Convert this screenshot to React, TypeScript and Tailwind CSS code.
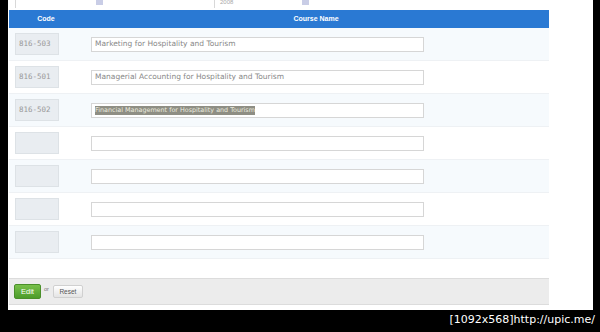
import React from 'react';

const ROWS = [
    { code: '816-503', name: 'Marketing for Hospitality and Tourism' },
    { code: '816-501', name: 'Managerial Accounting for Hospitality and Tourism' },
    { code: '816-502', name: 'Financial Management for Hospitality and Tourism', selected: true },
    { code: '', name: '' },
    { code: '', name: '' },
    { code: '', name: '' },
    { code: '', name: '' },
];

export default function App() {
    return (
        <div className="w-[600px] h-[332px] bg-black flex flex-col overflow-hidden" style={{ fontFamily: '"Liberation Sans", Arial, sans-serif' }}>
            {/* Page frame */}
            <div className="ml-[8px] mr-[7px] h-[310px] bg-white flex flex-col">
                {/* Cut-off row from above */}
                <div className="h-[10px] flex items-start pl-[7px]">
                    <div className="w-px h-[8px] bg-[#d8d8d8]" />
                    <div className="ml-[80px] w-[7px] h-[5px] bg-[#c9cde6]" />
                    <div className="ml-[111px] w-[85px] h-[8px] border-l border-[#d8d8d8] flex items-start pl-[5px]">
                        <span className="text-[6px] leading-[5px] text-[#aaa]">2008</span>
                    </div>
                    <div className="ml-[3px] w-[7px] h-[5px] bg-[#c9cde6]" />
                </div>

                {/* Table */}
                <div className="ml-px w-[540px]">
                    <div className="h-[18px] bg-[#2a79d3] flex items-center text-white font-bold text-[7px]">
                        <div className="w-[74px] text-center">Code</div>
                        <div className="flex-1 text-center">Course Name</div>
                    </div>
                    {ROWS.map((r, i) => (
                        <div key={i} className={`h-[33px] flex items-center border-b border-[#eef1f4] ${i % 2 === 0 ? 'bg-[#f6fafd]' : 'bg-white'}`}>
                            <div className="w-[74px] pl-[6px]">
                                <div className="w-[44px] h-[22px] bg-[#e9edf1] border border-[#dde2e6] flex items-center pl-[3px] text-[7.5px] text-[#999]" style={{ fontFamily: '"DejaVu Sans Mono", monospace' }}>
                                    {r.code}
                                </div>
                            </div>
                            <div className="ml-[8px] w-[333px] h-[15px] bg-white border border-[#d6d6d6] flex items-center pl-[3px] text-[#888] whitespace-nowrap" style={{ fontFamily: '"DejaVu Sans", sans-serif' }}>
                                {r.selected ? (
                                    <span className="bg-[#8e8e84] text-[#ececdf] text-[6.4px] leading-[9px]">{r.name}</span>
                                ) : (
                                    <span className="text-[7.5px]">{r.name}</span>
                                )}
                            </div>
                        </div>
                    ))}
                </div>

                {/* Footer actions */}
                <div className="ml-px mt-[19px] w-[540px] h-[27px] bg-[#ececec] border-t border-b border-[#dcdcdc] flex items-center pl-[5px]">
                    <button className="w-[27px] h-[15px] rounded-[2px] bg-gradient-to-b from-[#78c04a] to-[#4c9c2a] border border-[#4a8f2a] text-white text-[7.5px]">Edit</button>
                    <span className="ml-[3px] -mt-[5px] text-[5.5px] text-[#777]">or</span>
                    <button className="ml-[4px] w-[30px] h-[13px] rounded-[2px] bg-gradient-to-b from-white to-[#e4e4e4] border border-[#d0d0d0] text-[#555] text-[6.5px]">Reset</button>
                </div>
            </div>

            {/* Watermark */}
            <div className="flex justify-end pr-[5px] pt-[3px] text-white text-[11px] leading-[14px]" style={{ fontFamily: '"DejaVu Sans", sans-serif' }}>
                [1092x568]http://upic.me/
            </div>
        </div>
    );
}
